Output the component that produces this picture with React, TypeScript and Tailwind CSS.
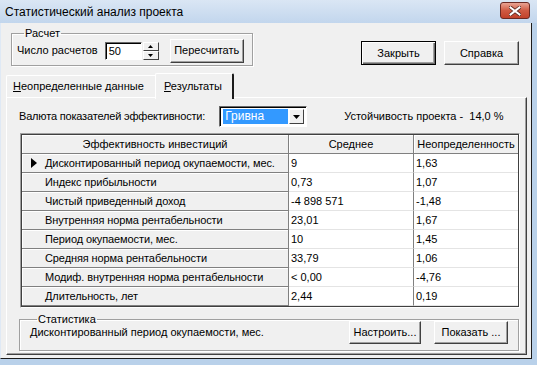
import React from "react";

const rows = [
  { name: "Дисконтированный период окупаемости, мес.", avg: "9", unc: "1,63", current: true },
  { name: "Индекс прибыльности", avg: "0,73", unc: "1,07" },
  { name: "Чистый приведенный доход", avg: "-4 898 571", unc: "-1,48" },
  { name: "Внутренняя норма рентабельности", avg: "23,01", unc: "1,67" },
  { name: "Период окупаемости, мес.", avg: "10", unc: "1,45" },
  { name: "Средняя норма рентабельности", avg: "33,79", unc: "1,06" },
  { name: "Модиф. внутренняя норма рентабельности", avg: "< 0,00", unc: "-4,76" },
  { name: "Длительность, лет", avg: "2,44", unc: "0,19" },
];

function Button({ children, isDefault, className }: { children: React.ReactNode; isDefault?: boolean; className?: string }) {
  return (
    <div
      className={
        "flex items-center justify-center bg-[#f0f0f0] " +
        (isDefault
          ? "border border-black shadow-[inset_1px_1px_0_#fff,inset_-1px_-1px_0_#696969,inset_-2px_-2px_0_#a0a0a0] "
          : "border-t border-l border-t-white border-l-white border-r border-b border-r-[#404040] border-b-[#404040] shadow-[inset_-1px_-1px_0_#a0a0a0] ") +
        (className ?? "")
      }
    >
      {children}
    </div>
  );
}

function GroupBox({ title, className, children }: { title: string; className?: string; children: React.ReactNode }) {
  return (
    <fieldset
      className={
        "border border-[#a0a0a0] shadow-[1px_1px_0_#fff,inset_1px_1px_0_#fff] " + (className ?? "")
      }
    >
      <legend className="ml-[7px] px-[1px] leading-[13px]">{title}</legend>
      {children}
    </fieldset>
  );
}

export default function App() {
  return (
    <div
      className="w-[537px] h-[365px] overflow-hidden bg-[#b9d1ea] text-[11px] text-black"
      style={{ fontFamily: '"Liberation Sans", Arial, sans-serif' }}
    >
      {/* title bar */}
      <div className="h-[23px] flex items-center justify-between bg-gradient-to-b from-[#dae6f4] to-[#c2d6ed] pl-[5px] pr-[7px]">
        <span className="text-[12px] text-black">Статистический анализ проекта</span>
        <div className="w-[30px] h-[17px] mt-[-2px] rounded-[3px] border border-[#6b2a24] bg-gradient-to-b from-[#e8a393] via-[#cf5a43] to-[#c2412a] flex items-center justify-center">
          <svg width="12" height="10" viewBox="0 0 12 10">
            <path d="M1.5 1.5 L10.5 8.5 M10.5 1.5 L1.5 8.5" stroke="#5a2a22" strokeWidth="3.6" strokeLinecap="square" />
            <path d="M1.5 1.5 L10.5 8.5 M10.5 1.5 L1.5 8.5" stroke="#ffffff" strokeWidth="2" strokeLinecap="square" />
          </svg>
        </div>
      </div>

      {/* client area */}
      <div className="h-[336px] w-[532px] bg-[#f0f0f0] border-l border-l-[#dfe9f5] border-r border-b border-r-[#1b1b1b] border-b-[#1b1b1b] flex flex-col">
        {/* top controls */}
        <div className="flex items-start pl-[10px] pr-[12px] pt-[4px] h-[50px]">
          <GroupBox title="Расчет" className="w-[242px] h-[39px] flex items-center pl-[5px]">
            <div className="flex items-center mt-[-4px]">
              <span>Число расчетов</span>
              <div className="ml-[7px] w-[37px] h-[18px] bg-white border border-t-[#696969] border-l-[#696969] border-r-white border-b-white shadow-[inset_1px_1px_0_#000] pl-[3px] leading-[16px]">
                50
              </div>
              <div className="ml-[1px] w-[16px] h-[18px] flex flex-col">
                <div className="h-[9px] flex items-center justify-center bg-[#f0f0f0] border border-t-white border-l-white border-r-[#404040] border-b-[#404040]">
                  <svg width="5" height="3" viewBox="0 0 5 3"><path d="M2.5 0 L5 3 L0 3 Z" fill="#000" /></svg>
                </div>
                <div className="h-[9px] flex items-center justify-center bg-[#f0f0f0] border border-t-white border-l-white border-r-[#404040] border-b-[#404040]">
                  <svg width="5" height="3" viewBox="0 0 5 3"><path d="M0 0 L5 0 L2.5 3 Z" fill="#000" /></svg>
                </div>
              </div>
              <Button className="ml-[11px] w-[74px] h-[24px]">Пересчитать</Button>
            </div>
          </GroupBox>
          <Button isDefault className="ml-auto mt-[14px] w-[75px] h-[24px]">Закрыть</Button>
          <Button className="ml-[8px] mt-[14px] w-[75px] h-[24px]">Справка</Button>
        </div>

        {/* tabs */}
        <div className="flex items-end pl-[5px] h-[24px]">
          <div className="h-[22px] w-[149px] border-t border-l border-t-white border-l-white flex items-center pl-[6px] rounded-tl-[2px]">
            <span><span className="underline">Н</span>еопределенные данные</span>
          </div>
          <div className="h-[26px] w-[79px] mb-[-2px] relative z-10 bg-[#f0f0f0] border-t border-l border-t-white border-l-white border-r-2 border-r-[#1b1b1b] flex items-start pt-[4px] pl-[8px] rounded-tl-[2px] rounded-tr-[2px]">
            <span><span className="underline">Р</span>езультаты</span>
          </div>
        </div>

        {/* tab panel */}
        <div className="ml-[5px] mr-[4px] h-[258px] border-t border-l border-t-white border-l-white border-r border-b border-r-[#404040] border-b-[#404040] shadow-[inset_-1px_-1px_0_#a0a0a0] flex flex-col pl-[13px] pr-[8px]">
          <div className="flex items-center h-[35px] pt-[2px]">
            <span className="ml-[-1px] tracking-[-0.18px]">Валюта показателей эффективности:</span>
            <div className="ml-[14px] w-[88px] h-[21px] bg-white border border-t-[#696969] border-l-[#696969] border-r-white border-b-white shadow-[inset_1px_1px_0_#000] flex items-center p-[2px] pl-[3px]">
              <div className="flex-1 h-[15px] bg-[#3399ff] text-white leading-[15px] pl-[2px] text-[12px]">Гривна</div>
              <div className="ml-[1px] w-[15px] h-[15px] flex items-center justify-center bg-[#f0f0f0] border border-t-white border-l-white border-r-[#404040] border-b-[#404040]">
                <svg width="7" height="4" viewBox="0 0 7 4"><path d="M0 0 L7 0 L3.5 4 Z" fill="#000" /></svg>
              </div>
            </div>
            <span className="ml-[37px]">Устойчивость проекта -&nbsp;&nbsp;14,0 %</span>
          </div>

          {/* grid */}
          <div className="w-[500px] border border-t-[#a0a0a0] border-l-[#a0a0a0] border-r-white border-b-white">
            <div className="border border-[#404040] bg-white">
              <div className="grid grid-cols-[267px_125px_1fr]">
                <div className="h-[19px] flex items-center justify-center bg-[#f0f0f0] border-r border-b border-[#808080] shadow-[inset_1px_1px_0_#fff]">Эффективность инвестиций</div>
                <div className="h-[19px] flex items-center justify-center bg-[#f0f0f0] border-r border-b border-[#808080] shadow-[inset_1px_1px_0_#fff]">Среднее</div>
                <div className="h-[19px] flex items-center justify-center bg-[#f0f0f0] border-b border-[#808080] shadow-[inset_1px_1px_0_#fff]">Неопределенность</div>
                {rows.map((r) => (
                  <React.Fragment key={r.name}>
                    <div className="h-[19px] flex items-center bg-[#f0f0f0] border-r border-b border-[#808080] shadow-[inset_1px_1px_0_#fff] pl-[9px]">
                      <span className="w-[14px] flex items-center">
                        {r.current && (
                          <svg width="6" height="10" viewBox="0 0 6 10"><path d="M0 0 L6 5 L0 10 Z" fill="#000" /></svg>
                        )}
                      </span>
                      <span className="tracking-[-0.1px]">{r.name}</span>
                    </div>
                    <div className="h-[19px] flex items-center pl-[2px] border-r border-[#808080] border-b border-b-[#e4e4e4]">{r.avg}</div>
                    <div className="h-[19px] flex items-center pl-[2px] border-b border-b-[#e4e4e4]">{r.unc}</div>
                  </React.Fragment>
                ))}
              </div>
            </div>
          </div>

          {/* statistics */}
          <GroupBox title="Статистика" className="mt-[5px] w-[500px] h-[38px] ml-[-1px] flex items-center pl-[10px] pr-[10px]">
            <div className="flex items-center w-full mt-[-5px]">
              <span>Дисконтированный период окупаемости, мес.</span>
              <Button className="ml-auto w-[72px] h-[23px]">Настроить...</Button>
              <Button className="ml-[13px] w-[74px] h-[23px]">Показать ...</Button>
            </div>
          </GroupBox>
        </div>
      </div>
    </div>
  );
}
